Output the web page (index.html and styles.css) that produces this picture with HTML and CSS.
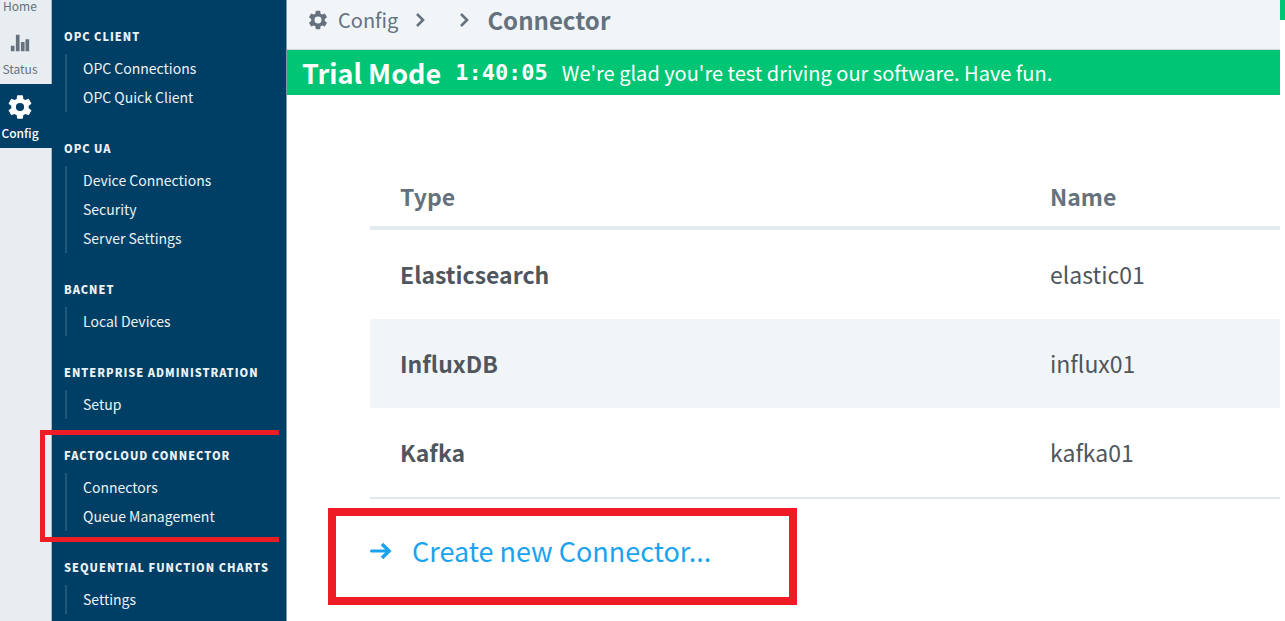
FILE: index.html
```html
<!DOCTYPE html>
<html lang="en">
<head>
<meta charset="utf-8">
<title>Config - Connector</title>
<link rel="stylesheet" href="styles.css">
</head>
<body>
<div class="app">
  <nav class="rail" aria-label="Primary">
    <a class="rail-item rail-home" href="#">Home</a>
    <a class="rail-item" href="#">
      <svg class="rail-icon" viewBox="0 0 24 24" aria-hidden="true"><path fill="currentColor" d="M2 15h4v6H2zM7.500 3h4v18h-4zM13 11h4v10h-4zM18 8h4v13h-4z"/></svg>
      Status
    </a>
    <a class="rail-item active" href="#" aria-current="page">
      <svg class="rail-icon gear" viewBox="0 0 24 24" aria-hidden="true"><path fill="currentColor" d="M19.430 12.980c.04-.32.07-.64.07-.98s-.03-.66-.07-.98l2.110-1.650c.19-.15.24-.42.12-.64l-2-3.460c-.12-.22-.39-.3-.61-.22l-2.490 1c-.52-.4-1.080-.73-1.690-.98l-.38-2.650A.49.490 0 0 0 14 2h-4c-.25 0-.46.18-.49.420l-.38 2.650c-.61.25-1.170.59-1.690.98l-2.490-1c-.23-.09-.49 0-.61.220l-2 3.460c-.13.22-.07.49.12.640l2.110 1.650c-.04.32-.07.65-.07.980s.03.66.07.980l-2.110 1.650c-.19.15-.24.42-.12.640l2 3.460c.12.22.39.3.61.220l2.490-1c.52.4 1.080.73 1.690.980l.38 2.650c.03.24.24.42.49.420h4c.25 0 .46-.18.49-.42l.38-2.650c.61-.25 1.170-.59 1.690-.98l2.490 1c.23.09.49 0 .61-.22l2-3.460c.12-.22.07-.49-.12-.64zM12 15.500a3.500 3.500 0 1 1 0-7 3.500 3.500 0 0 1 0 7z"/></svg>
      Config
    </a>
  </nav>

  <nav class="sidebar" aria-label="Config sections">
    <section class="group">
      <h2>OPC CLIENT</h2>
      <ul><li><a href="#">OPC Connections</a></li><li><a href="#">OPC Quick Client</a></li></ul>
    </section>
    <section class="group">
      <h2>OPC UA</h2>
      <ul><li><a href="#">Device Connections</a></li><li><a href="#">Security</a></li><li><a href="#">Server Settings</a></li></ul>
    </section>
    <section class="group">
      <h2>BACNET</h2>
      <ul><li><a href="#">Local Devices</a></li></ul>
    </section>
    <section class="group">
      <h2>ENTERPRISE ADMINISTRATION</h2>
      <ul><li><a href="#">Setup</a></li></ul>
    </section>
    <section class="group marked">
      <h2>FACTOCLOUD CONNECTOR</h2>
      <ul><li><a href="#">Connectors</a></li><li><a href="#">Queue Management</a></li></ul>
    </section>
    <section class="group">
      <h2>SEQUENTIAL FUNCTION CHARTS</h2>
      <ul><li><a href="#">Settings</a></li></ul>
    </section>
  </nav>

  <main class="content">
    <header class="crumbs">
      <svg class="crumb-gear" viewBox="0 0 24 24" aria-hidden="true"><path fill="currentColor" fill-rule="evenodd" d="M19.430 12.980c.04-.32.07-.64.07-.98s-.03-.66-.07-.98l2.110-1.650c.19-.15.24-.42.12-.64l-2-3.460c-.12-.22-.39-.3-.61-.22l-2.490 1c-.52-.4-1.080-.73-1.690-.98l-.38-2.650A.49.490 0 0 0 14 2h-4c-.25 0-.46.18-.49.420l-.38 2.650c-.61.25-1.170.59-1.690.98l-2.490-1c-.23-.09-.49 0-.61.220l-2 3.460c-.13.22-.07.49.12.640l2.110 1.650c-.04.32-.07.65-.07.980s.03.66.07.980l-2.110 1.650c-.19.15-.24.42-.12.640l2 3.460c.12.22.39.3.61.220l2.490-1c.52.4 1.080.73 1.690.980l.38 2.650c.03.24.24.42.49.420h4c.25 0 .46-.18.49-.42l.38-2.650c.61-.25 1.170-.59 1.690-.98l2.490 1c.23.09.49 0 .61-.22l2-3.460c.12-.22.07-.49-.12-.64zM12 15.800a3.800 3.800 0 1 1 0-7.600 3.800 3.800 0 0 1 0 7.600z"/></svg>
      <a class="crumb-link" href="#">Config</a>
      <svg class="chevron" viewBox="0 0 10 14" aria-hidden="true"><path d="M2 1l6 6-6 6" fill="none" stroke="currentColor" stroke-width="2.600"/></svg>
      <svg class="chevron second" viewBox="0 0 10 14" aria-hidden="true"><path d="M2 1l6 6-6 6" fill="none" stroke="currentColor" stroke-width="2.600"/></svg>
      <h1>Connector</h1>
    </header>
    <div class="trial">
      <strong>Trial Mode</strong>
      <span class="timer">1:40:05</span>
      <span class="trial-note">We're glad you're test driving our software. Have fun.</span>
    </div>
    <table class="connectors">
      <thead><tr><th scope="col">Type</th><th scope="col">Name</th></tr></thead>
      <tbody>
        <tr><th scope="row">Elasticsearch</th><td>elastic01</td></tr>
        <tr><th scope="row">InfluxDB</th><td>influx01</td></tr>
        <tr><th scope="row">Kafka</th><td>kafka01</td></tr>
      </tbody>
    </table>
    <div class="callout">
      <a class="create" href="#">
        <svg class="arrow" viewBox="0 0 22 18" aria-hidden="true"><path d="M1.500 9h17" fill="none" stroke="currentColor" stroke-width="3" stroke-linecap="round"/><path d="M12 2l7 7-7 7" fill="none" stroke="currentColor" stroke-width="3.600"/></svg>
        Create new Connector...
      </a>
    </div>
  </main>
  <div class="edge"></div>
</div>
</body>
</html>
```

FILE: styles.css
```css
* { box-sizing: border-box; }
body { margin: 0; background: #fff; color: #4f565d; font-family: "Noto Sans CJK SC", "Noto Sans", sans-serif; }
a { color: inherit; text-decoration: none; }
h1, h2, ul { margin: 0; padding: 0; }
ul { list-style: none; }
.app { display: grid; grid-template-columns: 52px 235px minmax(0, 1fr) 5px; min-height: 100vh; }

.rail { background: #e8edf1; color: #65727e; border-right: 1px solid #a3b7c4; }
.rail-item { display: flex; flex-direction: column; align-items: center; gap: 7px; padding: 12px 11px 7px 0; font-size: 12px; line-height: 16px; }
.rail-home { padding: 0 11px 8px 0; line-height: 12px; }
.rail-icon { width: 22px; height: 22px; }
.gear { width: 28px; height: 28px; margin: -3px; }
.active { background: #003f65; color: #fff; font-weight: 500; margin-right: -1px; padding-right: 12px; }

.sidebar { background: #003f65; color: #edf2f5; border-right: 1px solid #7e9aac; padding: 28px 0 0 12px; }
.group { position: relative; margin-bottom: 28px; }
.group:last-child { margin-bottom: 0; }
.group h2 { font-size: 11px; line-height: 17px; font-weight: 900; letter-spacing: 1px; margin-bottom: 9px; white-space: nowrap; }
.group ul { margin-left: 1px; border-left: 2px solid #1f5878; padding-left: 16px; }
.group a { display: block; font-size: 14px; line-height: 29px; }
.marked::after { content: ""; position: absolute; top: -17px; bottom: -11px; left: -24px; right: 7px; border: 5px solid #ee1c25; border-right: 0; pointer-events: none; }

.crumbs { display: flex; align-items: center; height: 50px; padding: 0 20px 9px; background: #f1f5f8; border-bottom: 1px solid #ccd6dc; color: #65727e; }
.crumb-gear { width: 22px; height: 22px; }
.crumb-link { font-size: 20px; line-height: 28px; margin: 0 17px 0 9px; }
.chevron { width: 10px; height: 14px; }
.second { margin: 0 18px 0 34px; }
.crumbs h1 { font-size: 24px; line-height: 28px; font-weight: 700; }
.trial { display: flex; align-items: center; gap: 14px; height: 45px; padding: 0 15px; background: #00c574; color: #fff; white-space: nowrap; }
.trial strong { font-size: 27px; line-height: 32px; }
.timer { font: 700 22px/32px "DejaVu Sans Mono", "Liberation Mono", monospace; }
.trial-note { font-size: 20px; line-height: 32px; }

.connectors { width: calc(100% - 83px); margin: 73px 0 0 83px; border-collapse: separate; border-spacing: 0; table-layout: fixed; font-size: 23px; line-height: 32px; text-align: left; }
.connectors th, .connectors td { height: 89px; padding: 0 30px 2px; }
.connectors thead th { width: 650px; height: 62px; color: #65727e; border-bottom: 4px solid #e4ebef; }
.connectors thead th + th { width: auto; }
.connectors tbody tr:nth-child(even) { background: #f1f5f8; }
.connectors tbody tr:last-child > * { height: 91px; border-bottom: 2px solid #e0e8ed; }
.callout { width: 469px; margin: 9px 0 0 41px; padding: 16px 34px 28px; border: 8px solid #ee1c25; }
.create { display: flex; align-items: center; gap: 20px; color: #1ba3ee; font-size: 27px; line-height: 37px; white-space: nowrap; }
.arrow { width: 22px; height: 18px; }
.edge { height: 20px; background: #00c574; }
```
